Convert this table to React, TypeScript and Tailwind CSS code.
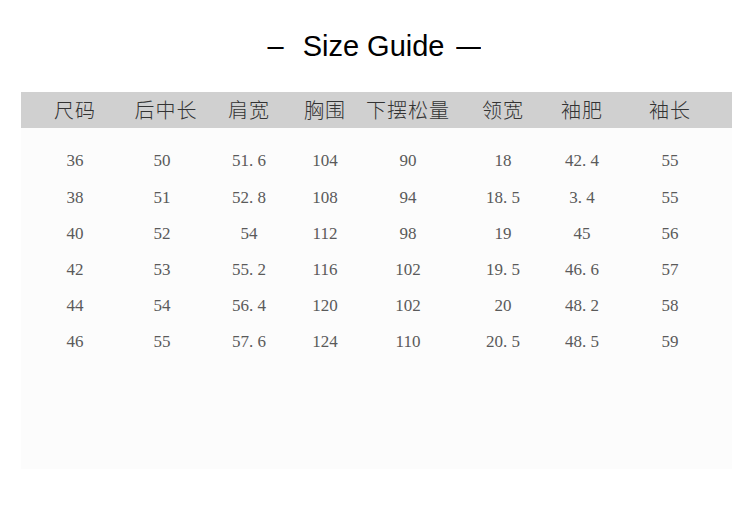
import React from 'react';

const columns = [
  { label: '尺码', width: 'w-[108px]' },
  { label: '后中长', width: 'w-[74px]' },
  { label: '肩宽', width: 'w-[92px]' },
  { label: '胸围', width: 'w-[60px]' },
  { label: '下摆松量', width: 'w-[106px]' },
  { label: '领宽', width: 'w-[84px]' },
  { label: '袖肥', width: 'w-[74px]' },
  { label: '袖长', width: 'w-[102px]' },
];

const rows = [
  ['36', '50', '51.6', '104', '90', '18', '42.4', '55'],
  ['38', '51', '52.8', '108', '94', '18.5', '3.4', '55'],
  ['40', '52', '54', '112', '98', '19', '45', '56'],
  ['42', '53', '55.2', '116', '102', '19.5', '46.6', '57'],
  ['44', '54', '56.4', '120', '102', '20', '48.2', '58'],
  ['46', '55', '57.6', '124', '110', '20.5', '48.5', '59'],
];

// SimSun style numbers: the period takes a full half-width cell
const Num: React.FC<{ value: string }> = ({ value }) => {
  const [whole, dec] = value.split('.');
  if (dec === undefined) return <>{value}</>;
  return (
    <>
      {whole}
      <span className="inline-block w-[0.5em] text-left">.</span>
      {dec}
    </>
  );
};

const App: React.FC = () => {
  return (
    <div className="w-[750px] h-[521px] bg-white overflow-hidden">
      <div
        className="flex items-center justify-center pt-[27px] h-[66px] text-[29px] leading-none text-black"
        style={{ fontFamily: '"Liberation Sans", Arial, sans-serif' }}
      >
        <span className="mr-[19px]">–</span>
        <span>Size Guide</span>
        <span className="ml-[9px] inline-block scale-x-[0.85]">—</span>
      </div>

      <div className="ml-[21px] mt-[26px] w-[711px]">
        <div
          className="flex items-center h-[36px] bg-[#d0d0d0] text-[20px] font-light text-[#333] tracking-[1px]"
          style={{ fontFamily: '"Noto Sans CJK SC", "Noto Sans", sans-serif' }}
        >
          {columns.map((c) => (
            <div key={c.label} className={`${c.width} text-center whitespace-nowrap`}>
              {c.label}
            </div>
          ))}
        </div>

        <div
          className="h-[341px] bg-[#fcfcfc] pt-[15px] text-[17px] text-[#5a5a5a]"
          style={{ fontFamily: '"Liberation Serif", "Times New Roman", serif' }}
        >
          {rows.map((r, i) => (
            <div key={i} className="flex items-center h-[36.2px]">
              {r.map((v, j) => (
                <div
                  key={j}
                  className={`${columns[j].width} text-center whitespace-nowrap ${j === 1 ? 'pr-[8px]' : ''}`}
                >
                  <Num value={v} />
                </div>
              ))}
            </div>
          ))}
        </div>
      </div>
    </div>
  );
};

export default App;
